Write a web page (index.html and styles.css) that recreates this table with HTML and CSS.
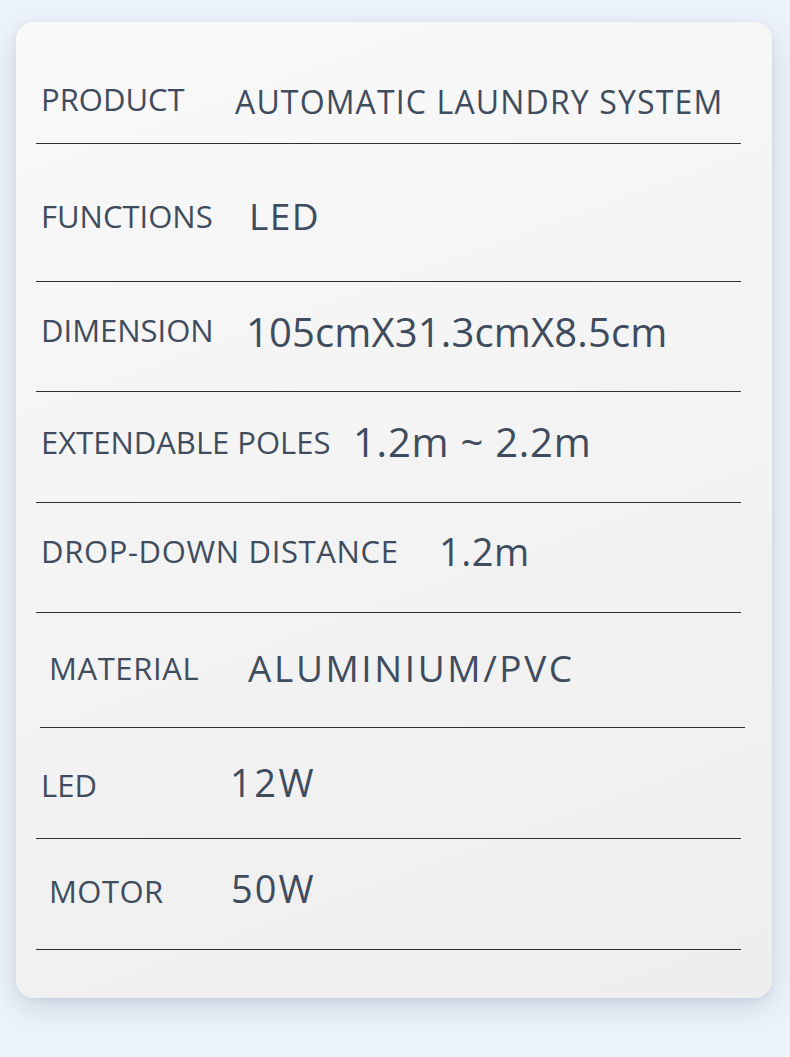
FILE: index.html
```html
<!DOCTYPE html>
<html lang="en">
<head>
<meta charset="utf-8">
<title>Specifications</title>
<link rel="stylesheet" href="styles.css">
</head>
<body>
<div class="card">
  <div class="row r1"><span class="label">PRODUCT</span><span class="value">AUTOMATIC LAUNDRY SYSTEM</span></div>
  <div class="row r2"><span class="label">FUNCTIONS</span><span class="value">LED</span></div>
  <div class="row r3"><span class="label">DIMENSION</span><span class="value">105cmX31.3cmX8.5cm</span></div>
  <div class="row r4"><span class="label">EXTENDABLE POLES</span><span class="value">1.2m ~ 2.2m</span></div>
  <div class="row r5"><span class="label">DROP-DOWN DISTANCE</span><span class="value">1.2m</span></div>
  <div class="row r6"><span class="label">MATERIAL</span><span class="value">ALUMINIUM/PVC</span></div>
  <div class="row r7"><span class="label">LED</span><span class="value">12W</span></div>
  <div class="row r8"><span class="label">MOTOR</span><span class="value">50W</span></div>
</div>
</body>
</html>
```
FILE: styles.css
```css
html, body {
  margin: 0;
  padding: 0;
}
body {
  background: #edf3fb;
  font-family: "Open Sans", "Noto Sans", sans-serif;
  color: #3f4c5e;
  height: 1057px;
  overflow: hidden;
}
.card {
  margin: 22px 0 0 16px;
  width: 756px;
  box-sizing: border-box;
  padding-bottom: 48px;
  border-radius: 18px;
  background: linear-gradient(160deg, #f9f9f9 0%, #f2f2f2 60%, #eeeeee 100%);
  box-shadow: 0 10px 30px rgba(70, 90, 120, 0.20), 0 2px 6px rgba(70, 90, 120, 0.08);
}
.row {
  display: flex;
  align-items: flex-start;
  box-sizing: border-box;
  margin: 0 31px 0 20px;
  padding-left: 5px;
  border-bottom: 1px solid #2f2f2f;
}
.row > span {
  line-height: 40px;
  height: 40px;
  white-space: nowrap;
}
.label {
  flex: none;
  font-size: 31px;
  width: var(--lw);
  letter-spacing: var(--lls, 0px);
}
.value {
  font-size: var(--vf);
  letter-spacing: var(--ls, 0px);
  margin-top: var(--vo, 0px);
}
.r1 { height: 122px; padding-top: 57px; --lw: 194px; --vf: 32px; --ls: 1.15px; --vo: 3px; }
.r2 { height: 138px; padding-top: 52px; --lw: 208px; --vf: 37px; --ls: 1.5px; }
.r3 { height: 110px; padding-top: 28px; --lw: 205px; --vf: 40px; --ls: 0.15px; --vo: 2px; }
.r4 { height: 111px; padding-top: 30px; --lw: 312px; --vf: 40px; --ls: 0.75px; }
.r5 { height: 110px; padding-top: 28px; --lw: 398px; --vf: 38px; --ls: 0.5px; --lls: 0.65px; }
.r6 { height: 115px; padding-top: 35px; margin-left: 24px; margin-right: 27px; padding-left: 9px; --lw: 199px; --vf: 37px; --ls: 2.6px; --lls: 0.6px; }
.r7 { height: 111px; padding-top: 37px; --lw: 189px; --vf: 38px; --ls: 2.5px; --vo: -3px; }
.r8 { height: 111px; padding-top: 32px; padding-left: 13px; --lw: 182px; --vf: 38px; --ls: 2px; --vo: -3px; --lls: 0.45px; }
```
